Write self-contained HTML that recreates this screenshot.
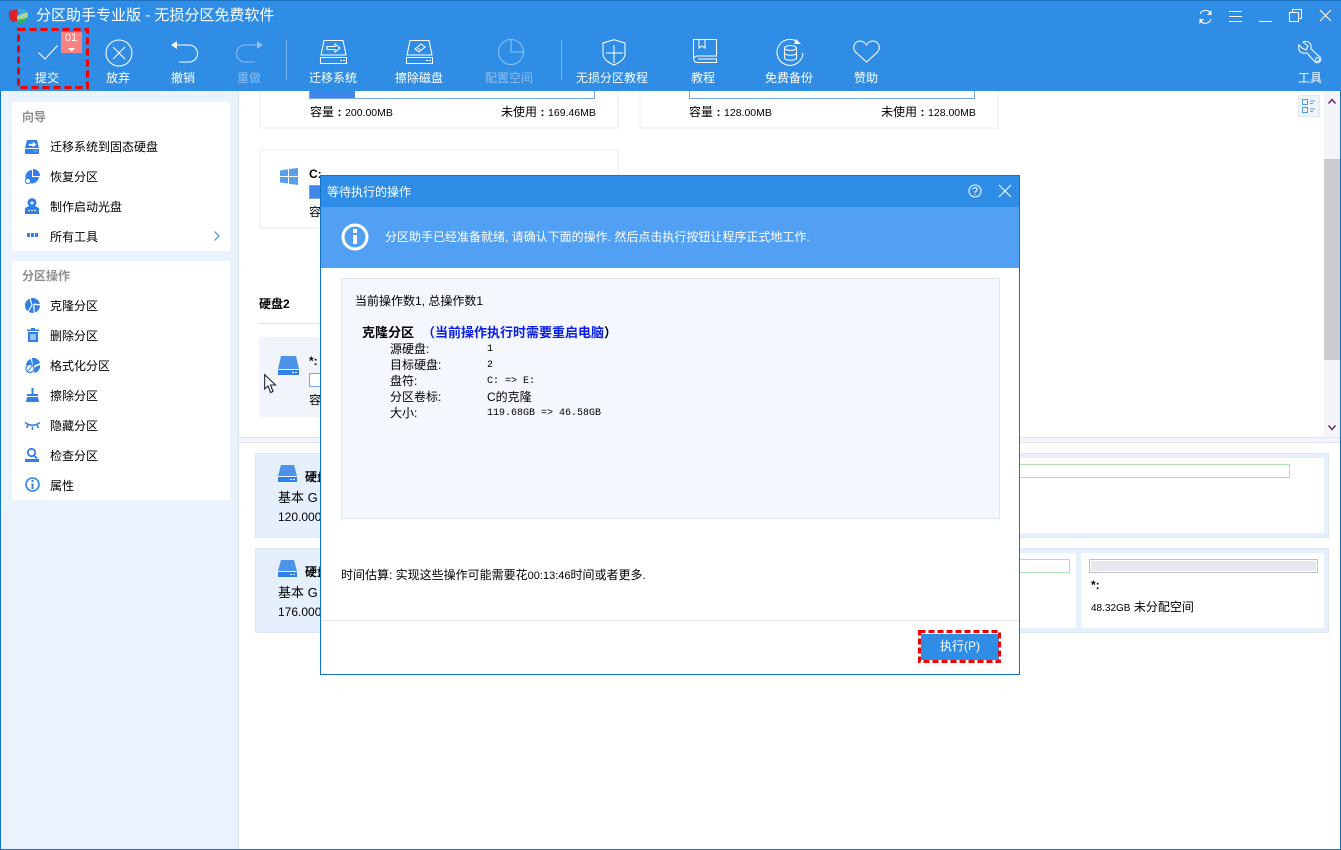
<!DOCTYPE html>
<html lang="zh"><head><meta charset="utf-8"><title>分区助手专业版</title>
<style>
html,body{margin:0;padding:0;width:1341px;height:850px;overflow:hidden;background:#fff}
body{position:relative;font-family:"Liberation Sans","Noto Sans CJK SC",sans-serif;font-size:12px;color:#000}
.a,.t,.c{position:absolute}
.t{white-space:nowrap;line-height:16px;height:16px}
.c{white-space:nowrap;line-height:16px;height:16px;text-align:center;transform:translateX(-50%)}
.w{color:#fff}.d{color:#8fbdf0}
.g{color:#8e8e8e;font-weight:bold}
.b{font-weight:bold}
svg{position:absolute;overflow:visible}
.s{fill:none;stroke:#fff;stroke-width:1.05}
.f{fill:#2f80ea}
.card{position:absolute;box-sizing:border-box;border:2px solid #f3f5f9;background:#fff}
.m{font-family:"Liberation Mono","Noto Sans CJK SC",monospace;font-size:10px}
.n{font-size:10.5px}
.o{display:inline-block;width:11px;text-align:center;font-weight:bold}
</style></head><body>
<!-- chrome -->
<div class="a" style="left:0;top:0;width:1341px;height:91px;background:#2f8de6"></div>
<div class="a" style="left:0;top:0;width:1341px;height:1px;background:#1a72c0"></div>
<div class="a" style="left:0;top:91px;width:239px;height:759px;background:#eaf2fd"></div>
<div class="a" style="left:238px;top:91px;width:1px;height:759px;background:#d9e5f5"></div>
<div class="a" style="left:0;top:91px;width:1px;height:759px;background:#1173c4"></div>
<div class="a" style="left:1340px;top:91px;width:1px;height:759px;background:#1173c4"></div>
<div class="a" style="left:0;top:849px;width:1341px;height:1px;background:#1173c4"></div>

<!-- logo + title -->
<svg style="left:8px;top:7px" width="22" height="18" viewBox="0 0 22 18">
<path d="M10 2 L1 4 L1 12 L5 15 L9 14 L9 9Z" fill="#d8232a"/>
<path d="M9 2 Q14 1 19 4 L12 8Z" fill="#3fa6d8"/><path d="M9 9 L19 5 Q21 8 19 11 L9 13Z" fill="#a8d8a0"/>
<path d="M9 14 L19 11 Q18 16 10 16Z" fill="#2fb84c"/></svg>
<div class="t w" style="left:36px;top:6px;font-size:15px;line-height:19px;height:19px">分区助手专业版 - 无损分区免费软件</div>

<!-- toolbar icons -->
<svg style="left:38px;top:45px" width="20" height="15"><path class="s" d="M.5 7.500L7 14L19.500 .5"/></svg>
<div class="a" style="left:61px;top:32px;width:21px;height:21px;background:#fb8080"></div>
<div class="c w" style="left:71px;top:31px;font-size:11px;line-height:15px;height:15px">01</div>
<svg style="left:68px;top:48px" width="7" height="4"><path d="M0 0H7L3.500 3.500Z" fill="#fff"/></svg>
<svg style="left:105px;top:39px" width="28" height="28"><circle class="s" cx="14" cy="14" r="13"/><path class="s" d="M8 8L20 20M20 8L8 20"/></svg>
<svg style="left:171px;top:40px" width="27" height="23"><path class="s" d="M3 5H18A8.500 8.500 0 0 1 18 22H8"/><path d="M0 5L6 1V9Z" fill="#fff"/></svg>
<svg style="left:236px;top:40px" width="27" height="23" opacity=".45"><path class="s" d="M24 5H9A8.500 8.500 0 0 0 9 22H19"/><path d="M27 5L21 1V9Z" fill="#fff"/></svg>
<div class="a" style="left:286px;top:40px;width:1px;height:40px;background:#7db6ee"></div>
<svg style="left:320px;top:40px" width="27" height="24"><path class="s" d="M4 .5H23L26 15H1ZM.5 17.500H26.500V23.500H.5ZM20 20.500H22M23 20.500H25"/><path class="s" d="M7 6.500H15V4L20 8L15 12V9.500H7Z"/></svg>
<svg style="left:406px;top:40px" width="27" height="24"><path class="s" d="M4 .5H23L26 15H1ZM.5 17.500H26.500V23.500H.5ZM20 20.500H22M23 20.500H25"/><path class="s" d="M9 9L15 4L19 7L13 12ZM12 8L14 10"/></svg>
<svg style="left:497px;top:38px" width="28" height="28" opacity=".45"><circle class="s" cx="14" cy="14" r="12.500"/><path class="s" d="M14 1.500V14H26.500"/></svg>
<div class="a" style="left:561px;top:40px;width:1px;height:40px;background:#7db6ee"></div>
<svg style="left:602px;top:39px" width="24" height="27"><path class="s" d="M12 .7L23 4V15C23 20 17 24 12 26C7 24 1 20 1 15V4Z"/><path class="s" d="M12 6V24M4 14H21"/></svg>
<svg style="left:693px;top:39px" width="24" height="25"><path class="s" d="M.5 21V.5H23.500V17H4A2.500 2.500 0 0 0 4 23.500H23.500V20H5"/><path class="s" d="M6 .5V9L9 7L12 9V.5"/></svg>
<svg style="left:776px;top:37px" width="29" height="30"><path class="s" d="M23 6A13 13 0 1 0 27 16"/><path d="M20 2L25 7H18Z" fill="#fff"/><ellipse class="s" cx="14.500" cy="11" rx="6" ry="2.500"/><path class="s" d="M8.500 11V21C8.500 24 20.500 24 20.500 21V11M8.500 16C8.500 19 20.500 19 20.500 16"/></svg>
<svg style="left:853px;top:40px" width="27" height="23"><path class="s" d="M13.500 22L2.500 12C-1.500 7 2 1 7 1C10 1 12 2.500 13.500 5C15 2.500 17 1 20 1C25 1 28.500 7 24.500 12Z"/></svg>
<svg style="left:1298px;top:40px" width="25" height="25"><path class="s" d="M5 2L10 6L8 10L4 8L1 5C-.5 11 3 14 9 13L17 22C20 25 25 20 22 17L13 9C14 3 10 0 5 2Z"/><circle class="s" cx="19.500" cy="19.500" r="2"/></svg>

<!-- window controls -->
<svg style="left:1198px;top:9px" width="15" height="16"><path class="s" d="M2 5A6 6 0 0 1 12.500 4M13 10A6 6 0 0 1 2.500 12"/><path d="M13.500 1V6H9ZM1.500 15V10H6Z" fill="#fff"/></svg>
<svg style="left:1229px;top:10px" width="13" height="13"><path class="s" d="M0 1.500H13M0 6.500H13M0 11.500H13"/></svg>
<svg style="left:1259px;top:20px" width="13" height="2"><path class="s" d="M0 1.500H13"/></svg>
<svg style="left:1289px;top:9px" width="14" height="14"><rect class="s" x=".5" y="3.500" width="9" height="9"/><path class="s" d="M3.500 3.500V.5H12.500V9.500H9.500"/></svg>
<svg style="left:1320px;top:10px" width="12" height="12"><path class="s" d="M0 0L11 11M11 0L0 11"/></svg>

<!-- toolbar labels -->
<div class="c w" style="left:47px;top:70px">提交</div>
<div class="c w" style="left:118px;top:70px">放弃</div>
<div class="c w" style="left:183px;top:70px">撤销</div>
<div class="c d" style="left:249px;top:70px">重做</div>
<div class="c w" style="left:333px;top:70px">迁移系统</div>
<div class="c w" style="left:419px;top:70px">擦除磁盘</div>
<div class="c d" style="left:509px;top:70px">配置空间</div>
<div class="c w" style="left:612px;top:70px">无损分区教程</div>
<div class="c w" style="left:703px;top:70px">教程</div>
<div class="c w" style="left:789px;top:70px">免费备份</div>
<div class="c w" style="left:866px;top:70px">赞助</div>
<div class="c w" style="left:1310px;top:70px">工具</div>

<!-- red dashed on submit -->
<svg style="left:17px;top:28px" width="72" height="61"><rect x="1.500" y="1.500" width="69" height="58" fill="none" stroke="#f00000" stroke-width="3" stroke-dasharray="7 4"/></svg>

<!-- sidebar panels -->
<div class="a" style="left:12px;top:102px;width:218px;height:149px;background:#fff"></div>
<div class="a" style="left:12px;top:261px;width:218px;height:239px;background:#fff"></div>
<div class="t g" style="left:22px;top:109px">向导</div>
<div class="t" style="left:50px;top:139px">迁移系统到固态硬盘</div>
<div class="t" style="left:50px;top:169px">恢复分区</div>
<div class="t" style="left:50px;top:199px">制作启动光盘</div>
<div class="t" style="left:50px;top:229px">所有工具</div>
<svg style="left:25px;top:140px" width="14" height="14"><path class="f" d="M2 0H12L14 8H0ZM0 9H14V14H0Z"/><path d="M4 4H8V2L11 4.500L8 7V5.500H4ZM9 11H11M12 11H13" fill="#fff" stroke="#fff" stroke-width=".5"/></svg>
<svg style="left:25px;top:169px" width="15" height="15"><path class="f" d="M8 0A7 7 0 0 1 15 7H8ZM7 1V8H14A7 7 0 0 1 1 11A7 7 0 0 1 7 1Z"/><circle cx="3" cy="12" r="2.600" fill="#fff" stroke="#2f80ea"/></svg>
<svg style="left:25px;top:198px" width="14" height="16"><path class="f" d="M4 8A4.500 4.500 0 1 1 10 8L14 10V16H0V10Z"/><circle cx="7" cy="5" r="1.500" fill="#fff"/><path d="M3 12.500H5M6 12.500H8M9 12.500H11" stroke="#fff"/></svg>
<svg style="left:27px;top:233px" width="11" height="4"><path class="f" d="M0 0H3V4H0ZM4 0H7V4H4ZM8 0H11V4H8Z"/></svg>
<svg style="left:214px;top:231px" width="6" height="10"><path d="M.5 .5L5 5L.5 9.500" fill="none" stroke="#3a8ce6" stroke-width="1.100"/></svg>

<div class="t g" style="left:22px;top:268px">分区操作</div>
<div class="t" style="left:50px;top:298px">克隆分区</div>
<div class="t" style="left:50px;top:328px">删除分区</div>
<div class="t" style="left:50px;top:358px">格式化分区</div>
<div class="t" style="left:50px;top:388px">擦除分区</div>
<div class="t" style="left:50px;top:418px">隐藏分区</div>
<div class="t" style="left:50px;top:448px">检查分区</div>
<div class="t" style="left:50px;top:478px">属性</div>
<svg style="left:25px;top:298px" width="15" height="15"><circle class="f" cx="7.500" cy="7.500" r="7.500"/><path d="M5 0L7 7L3 14M9 6L15 7M9 6V15" stroke="#fff" fill="none" stroke-width="1.200"/></svg>
<svg style="left:27px;top:328px" width="12" height="14"><path class="f" d="M4 0H8V1.500H12V3H0V1.500H4ZM1 4H11V14H1Z"/><path d="M4 6V12M6 6V12M8 6V12" stroke="#fff"/></svg>
<svg style="left:25px;top:358px" width="15" height="15"><path class="f" d="M7 0A7 7 0 0 1 15 5L8 8ZM6 1L7 7L1 7A7 7 0 0 1 6 1ZM10 9L15 7A7 7 0 0 1 9 15Z"/><circle cx="5" cy="10.500" r="4" fill="#fff" stroke="#2f80ea" stroke-width="1.200"/><path d="M3 13L7 8" stroke="#2f80ea"/></svg>
<svg style="left:26px;top:388px" width="13" height="14"><path class="f" d="M5.500 0H7.500V6H12V8H1V6H5.500ZM1 9H12L13 14H0Z"/></svg>
<svg style="left:25px;top:422px" width="15" height="8"><path d="M0 .5Q7.500 6 15 .5M3 3L1.500 6M7.500 4.500V8M12 3L13.500 6" fill="none" stroke="#2f80ea" stroke-width="1.500"/></svg>
<svg style="left:25px;top:448px" width="14" height="14"><circle cx="6.500" cy="4.500" r="3.700" fill="none" stroke="#2f80ea" stroke-width="1.800"/><path d="M9 7.500L12 10.500" stroke="#2f80ea" stroke-width="1.800"/><path class="f" d="M0 11H14V14H0Z"/></svg>
<svg style="left:25px;top:477px" width="15" height="15"><circle cx="7.500" cy="7.500" r="6.500" fill="none" stroke="#2f80ea" stroke-width="1.600"/><path class="f" d="M6.500 3H8.500V5H6.500ZM6.500 6.500H8.500V12H6.500Z"/></svg>

<!-- main top cards (clipped at toolbar bottom) -->
<div class="card" style="left:259px;top:91px;width:360px;height:38px;border-top:0"></div>
<div class="card" style="left:639px;top:91px;width:360px;height:38px;border-top:0"></div>
<div class="a" style="left:309px;top:91px;width:286px;height:8px;box-sizing:border-box;border:1px solid #79a5e0;border-top:0;background:#fff"></div>
<div class="a" style="left:310px;top:91px;width:45px;height:7px;background:#3f87ea"></div>
<div class="a" style="left:689px;top:91px;width:286px;height:8px;box-sizing:border-box;border:1px solid #79a5e0;border-top:0;background:#fff"></div>
<div class="t" style="left:310px;top:104px">容量<span class="o">:</span><span class="n">200.00MB</span></div>
<div class="t" style="left:501px;top:104px">未使用<span class="o">:</span><span class="n">169.46MB</span></div>
<div class="t" style="left:689px;top:104px">容量<span class="o">:</span><span class="n">128.00MB</span></div>
<div class="t" style="left:881px;top:104px">未使用<span class="o">:</span><span class="n">128.00MB</span></div>

<div class="card" style="left:259px;top:149px;width:360px;height:80px"></div>
<svg style="left:280px;top:168px" width="18" height="17"><path d="M0 2.500L8 1.200V8H0ZM9 1L18 0V8H9ZM0 9H8V15.500L0 14.500ZM9 9H18V17L9 15.800Z" fill="#57a0ec"/></svg>
<div class="t b" style="left:309px;top:166px">C:</div>
<div class="a" style="left:309px;top:185px;width:30px;height:14px;box-sizing:border-box;border:1px solid #79a5e0"></div>
<div class="a" style="left:310px;top:186px;width:20px;height:12px;background:#3f87ea"></div>
<div class="t" style="left:309px;top:204px">容量</div>

<div class="t b" style="left:259px;top:296px">硬盘2</div>
<div class="a" style="left:259px;top:323px;width:700px;height:1px;background:#d5e4f3"></div>
<div class="a" style="left:259px;top:337px;width:360px;height:80px;background:#f1f5fb"></div>
<svg style="left:278px;top:356px" width="21" height="19"><path d="M3 0H18L21 13H0Z" fill="#4d93ea"/><path d="M0 14H21V19H0Z" fill="#2f80ea"/><path d="M14 16.500H16M17 16.500H19" stroke="#fff"/></svg>
<div class="t b" style="left:309px;top:353px">*:</div>
<div class="a" style="left:309px;top:373px;width:30px;height:14px;box-sizing:border-box;border:1px solid #79a5e0;background:#fff"></div>
<div class="t" style="left:309px;top:392px">容量</div>
<svg style="left:264px;top:374px" width="13" height="20"><path d="M.7 .7V15L4 12L6.500 18.500L9 17.500L6.500 11H11.500Z" fill="#fff" stroke="#1c2340" stroke-width="1.100"/></svg>

<!-- scrollbar -->
<div class="a" style="left:1324px;top:91px;width:16px;height:347px;background:#f3f5f8"></div>
<div class="a" style="left:1324px;top:159px;width:16px;height:201px;background:#c9cbcf"></div>
<svg style="left:1328px;top:98px" width="8" height="6"><path d="M.5 5.500L4 1.500L7.500 5.500" fill="none" stroke="#6d2a72" stroke-width="1.500"/></svg>
<svg style="left:1328px;top:425px" width="8" height="6"><path d="M.5 .5L4 4.500L7.500 .5" fill="none" stroke="#6d2a72" stroke-width="1.500"/></svg>
<div class="a" style="left:1298px;top:95px;width:22px;height:22px;box-sizing:border-box;border:1px solid #e2e7f1;background:#f0f4fb"></div>
<svg style="left:1302px;top:99px" width="14" height="15"><path d="M.5 .5H5.500V5.500H.5ZM.5 8.500H5.500V13.500H.5ZM8 2H13M8 4.500H11M8 10H13M8 12.500H11" fill="none" stroke="#4f9df0"/></svg>

<!-- split -->
<div class="a" style="left:239px;top:437px;width:1101px;height:6px;background:#f0f3f8;border-top:1px solid #dfe6ef;border-bottom:1px solid #dfe6ef;box-sizing:border-box"></div>

<!-- lower disks -->
<div class="a" style="left:255px;top:453px;width:1074px;height:85px;box-sizing:border-box;background:#e6f0fd;border:1px solid #dce7f6"></div>
<div class="a" style="left:1000px;top:458px;width:324px;height:75px;background:#fff"></div>
<div class="a" style="left:1000px;top:464px;width:290px;height:14px;box-sizing:border-box;border:1px solid #aee2b4;background:#fff"></div>
<div class="a" style="left:255px;top:548px;width:1074px;height:85px;box-sizing:border-box;background:#e6f0fd;border:1px solid #dce7f6"></div>
<div class="a" style="left:1000px;top:553px;width:76px;height:75px;background:#fff"></div>
<div class="a" style="left:1000px;top:559px;width:70px;height:14px;box-sizing:border-box;border:1px solid #aee2b4;background:#fff"></div>
<div class="a" style="left:1081px;top:553px;width:243px;height:75px;background:#fff"></div>
<div class="a" style="left:1089px;top:559px;width:229px;height:14px;box-sizing:border-box;border:1px solid #bcc0c8;background:#e6e8ee;outline:1px solid #fff;outline-offset:-2px"></div>
<div class="t b" style="left:1091px;top:577px">*:</div>
<div class="t" style="left:1091px;top:599px"><span style="font-size:10px">48.32GB</span> 未分配空间</div>
<svg style="left:278px;top:465px" width="19" height="17"><path d="M3 0H16L19 11H0Z" fill="#4d93ea"/><path d="M0 12H19V17H0Z" fill="#2f80ea"/><path d="M12 14.500H14M15 14.500H17" stroke="#fff"/></svg>
<svg style="left:278px;top:560px" width="19" height="17"><path d="M3 0H16L19 11H0Z" fill="#4d93ea"/><path d="M0 12H19V17H0Z" fill="#2f80ea"/><path d="M12 14.500H14M15 14.500H17" stroke="#fff"/></svg>
<div class="t b" style="left:305px;top:469px">硬盘</div>
<div class="t" style="left:278px;top:490px;font-size:13px">基本 G</div>
<div class="t" style="left:278px;top:509px">120.000</div>
<div class="t b" style="left:305px;top:564px">硬盘</div>
<div class="t" style="left:278px;top:585px;font-size:13px">基本 G</div>
<div class="t" style="left:278px;top:604px">176.000</div>

<!-- dialog -->
<div class="a" style="left:320px;top:175px;width:700px;height:500px;box-sizing:border-box;border:1px solid #1173c4;background:#fff;overflow:hidden">
 <div class="a" style="left:0;top:0;width:698px;height:31px;background:#2e8de6"></div>
 <div class="a" style="left:0;top:31px;width:698px;height:61px;background:#52a0f3"></div>
 <div class="t w" style="left:6px;top:8px">等待执行的操作</div>
 <svg style="left:647px;top:8px" width="14" height="14"><circle class="s" cx="7" cy="7" r="6"/><path d="M5 5.500A2 2 0 1 1 7.500 7.500Q7 8 7 9M7 10V11" fill="none" stroke="#fff"/></svg>
 <svg style="left:678px;top:9px" width="12" height="12"><path class="s" d="M0 0L12 12M12 0L0 12"/></svg>
 <svg style="left:20px;top:47px" width="28" height="28"><circle cx="14" cy="14" r="12" fill="none" stroke="#fff" stroke-width="3"/><path d="M12 6H16V10H12ZM12 12H16V21H12Z" fill="#fff"/></svg>
 <div class="t w" style="left:64px;top:53px">分区助手已经准备就绪, 请确认下面的操作. 然后点击执行按钮让程序正式地工作.</div>
 <div class="a" style="left:20px;top:102px;width:659px;height:241px;box-sizing:border-box;background:#f4f7fd;border:1px solid #dfe5f0"></div>
 <div class="t" style="left:34px;top:117px">当前操作数1, 总操作数1</div>
 <div class="t b" style="left:41px;top:149px;font-size:13px">克隆分区</div>
 <div class="t b" style="left:101px;top:149px;font-size:13px;color:#0a1ee6">（当前操作执行时需要重启电脑<span style="color:#000">）</span></div>
 <div class="t" style="left:69px;top:165px">源硬盘:</div><div class="t m" style="left:166px;top:166px">1</div>
 <div class="t" style="left:69px;top:181px">目标硬盘:</div><div class="t m" style="left:166px;top:182px">2</div>
 <div class="t" style="left:69px;top:197px">盘符:</div><div class="t m" style="left:166px;top:198px">C: =&gt; E:</div>
 <div class="t" style="left:69px;top:213px">分区卷标:</div><div class="t" style="left:166px;top:213px">C的克隆</div>
 <div class="t" style="left:69px;top:229px">大小:</div><div class="t m" style="left:166px;top:230px">119.68GB =&gt; 46.58GB</div>
 <div class="t" style="left:20px;top:391px">时间估算: 实现这些操作可能需要花<span style="font-size:11px">00:13:46</span>时间或者更多.</div>
 <div class="a" style="left:0;top:444px;width:698px;height:1px;background:#e4e6ee"></div>
 <div class="a" style="left:600px;top:458px;width:78px;height:26px;background:#2f8de6"></div>
 <div class="c w" style="left:639px;top:462px">执行(P)</div>
 <svg style="left:597px;top:454px" width="83" height="33"><rect x="1.500" y="1.500" width="80" height="30" fill="none" stroke="#f00000" stroke-width="3" stroke-dasharray="6 3"/></svg>
</div>
</body></html>
